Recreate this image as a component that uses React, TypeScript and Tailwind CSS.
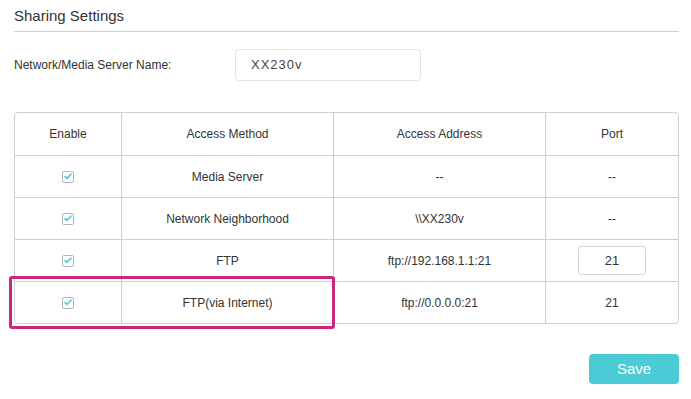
const font = { fontFamily: '"Liberation Sans", Arial, sans-serif' };

type Row = {
  method: string;
  address: string;
  port: string;
  portInput?: boolean;
};

const rows: Row[] = [
  { method: "Media Server", address: "--", port: "--" },
  { method: "Network Neighborhood", address: "\\\\XX230v", port: "--" },
  { method: "FTP", address: "ftp://192.168.1.1:21", port: "21", portInput: true },
  { method: "FTP(via Internet)", address: "ftp://0.0.0.0:21", port: "21" },
];

function CheckBox() {
  return (
    <span className="flex h-[12px] w-[12px] items-center justify-center rounded-[2px] border border-[#b5b5b5] bg-white">
      <svg width="8" height="7" viewBox="0 0 8 7" fill="none">
        <path d="M1 3.6 L3 5.4 L7 1.2" stroke="#4acbd6" strokeWidth="1.6" strokeLinecap="round" strokeLinejoin="round" />
      </svg>
    </span>
  );
}

const cols = "grid grid-cols-[107px_212px_212px_1fr]";

export default function App() {
  return (
    <div className="min-h-[399px] w-[691px] bg-white pl-[14px] pr-[12px] text-[12px] text-[#333]" style={font}>
      <div className="pt-[7px]">
        <div className="pb-[6px] text-[15px] leading-[18px] text-[#333]">Sharing Settings</div>
        <div className="h-px bg-[#d0d0d0]" />
      </div>

      <div className="mt-[17px] flex items-center">
        <div className="w-[221px] text-[12px]">Network/Media Server Name:</div>
        <div className="flex h-[32px] w-[186px] items-center rounded-[4px] border border-[#e2e2e2] px-[15px] text-[13px] tracking-[1px] text-[#444]">
          XX230v
        </div>
      </div>

      <div className="relative mt-[31px]">
        <div className="overflow-hidden rounded-[4px] border border-[#cfcfcf]">
          <div className={`${cols} h-[42px] items-stretch`}>
            {["Enable", "Access Method", "Access Address", "Port"].map((h, i) => (
              <div
                key={h}
                className={`flex items-center justify-center ${i < 3 ? "border-r border-[#cfcfcf]" : ""}`}
              >
                {h}
              </div>
            ))}
          </div>
          {rows.map((r) => (
            <div key={r.method} className={`${cols} h-[42px] border-t border-[#cfcfcf]`}>
              <div className="flex items-center justify-center border-r border-[#cfcfcf]">
                <CheckBox />
              </div>
              <div className="flex items-center justify-center border-r border-[#cfcfcf]">{r.method}</div>
              <div className="flex items-center justify-center border-r border-[#cfcfcf]">{r.address}</div>
              <div className="flex items-center justify-center">
                {r.portInput ? (
                  <div className="flex h-[29px] w-[68px] items-center justify-center rounded-[3px] border border-[#d4d4d4] text-[13px]">
                    {r.port}
                  </div>
                ) : (
                  r.port
                )}
              </div>
            </div>
          ))}
        </div>
        <div className="pointer-events-none absolute left-[-5px] top-[164px] h-[53px] w-[326px] rounded-[3px] border-[3px] border-[#c9287a]" />
      </div>

      <div className="mt-[30px] flex justify-end">
        <button className="h-[30px] w-[90px] rounded-[4px] bg-[#4acbd6] text-[15px] text-white" style={font}>
          Save
        </button>
      </div>
    </div>
  );
}
